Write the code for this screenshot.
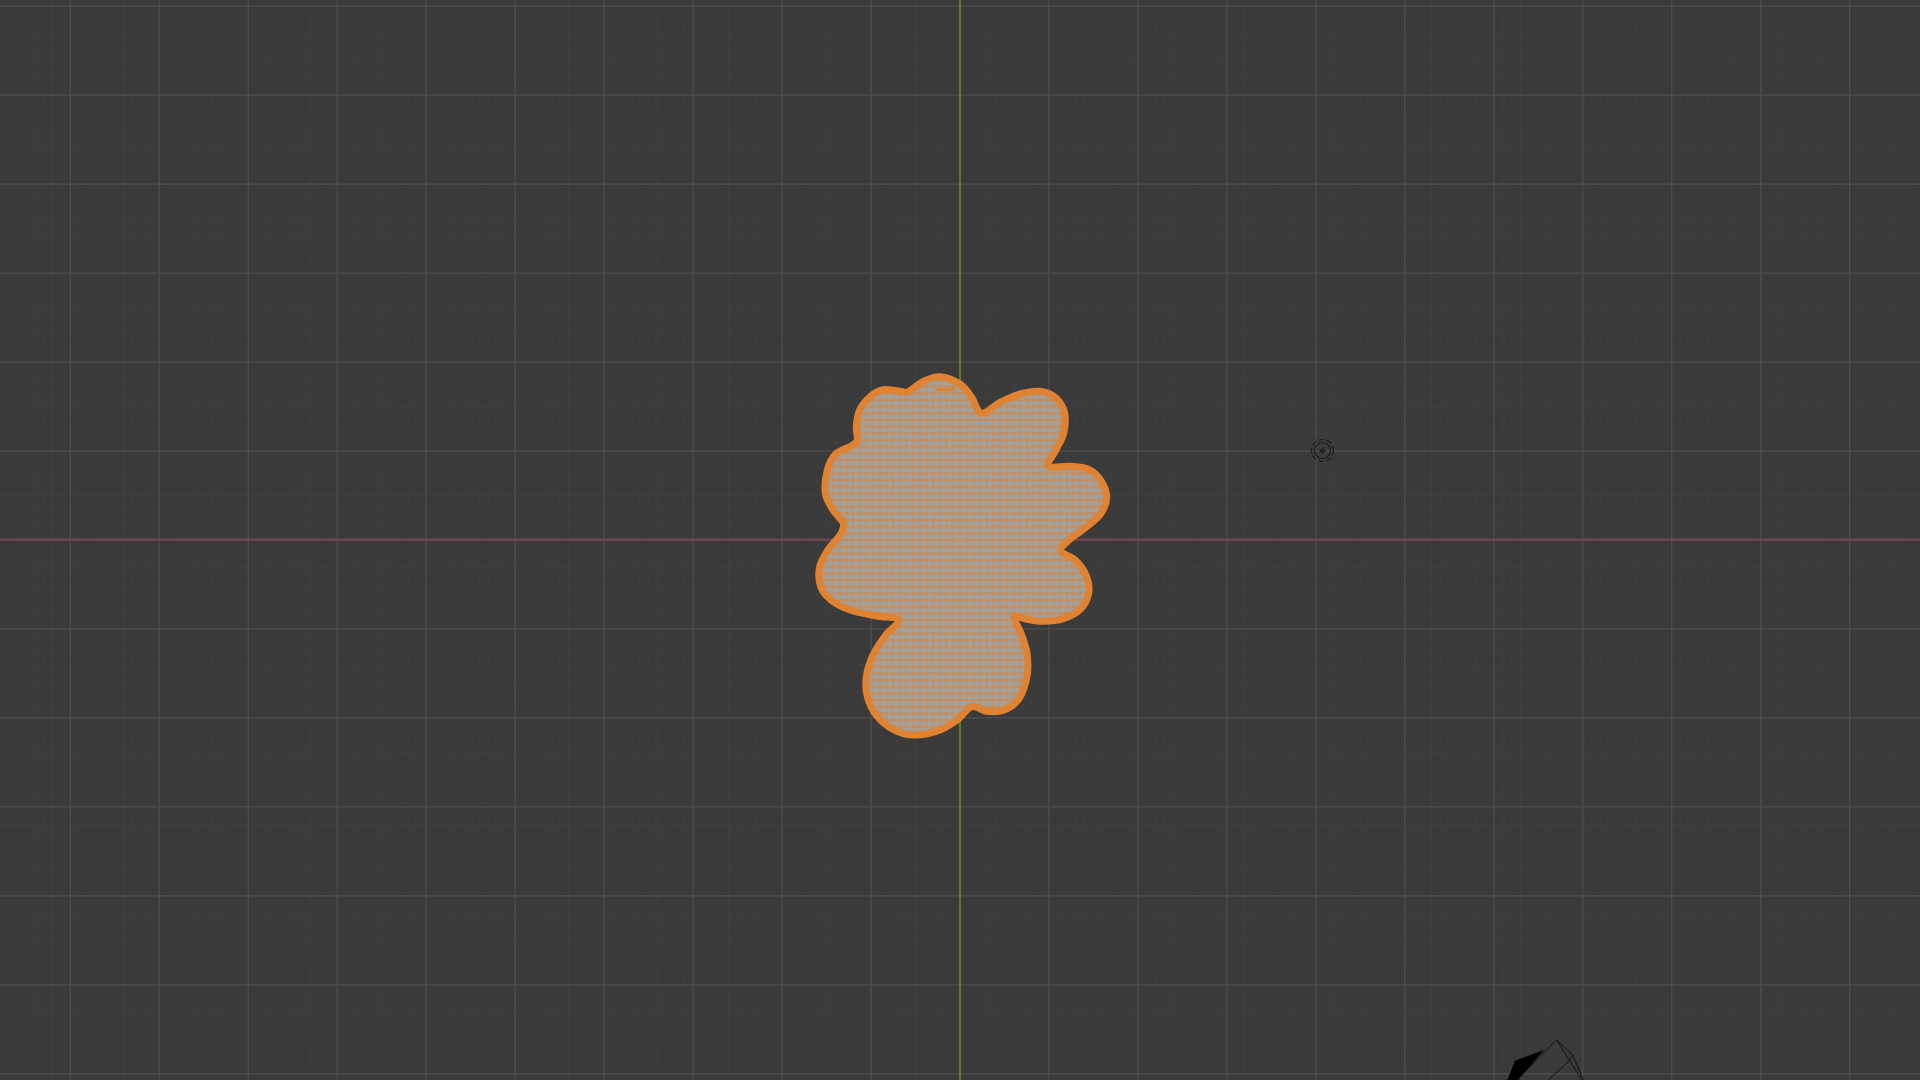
import React from "react";

const CENTER_X = 960;
const CENTER_Y = 540;
const MAJOR = 88.97;
const MINOR = MAJOR / 10;

const blobPoints: [number, number][] = [
  [420, 50], [480, 72], [515, 112], [545, 160], [600, 127], [660, 102], [720, 94], [768, 114],
  [794, 160], [791, 220], [768, 270], [745, 318], [810, 319], [868, 329], [906, 367], [920, 415],
  [901, 463], [850, 508], [810, 538], [782, 572], [828, 602], [860, 650], [866, 700], [841, 748],
  [790, 776], [730, 784], [680, 778], [642, 770], [663, 820], [681, 880], [681, 950], [656, 1018],
  [610, 1051], [560, 1054], [515, 1040], [470, 1081], [410, 1114], [340, 1125], [282, 1110], [229, 1066],
  [202, 1010], [199, 950], [219, 885], [257, 825], [296, 780], [230, 768], [152, 751], [94, 721],
  [62, 680], [59, 620], [84, 570], [120, 525], [130, 490], [99, 450], [76, 400], [82, 330],
  [107, 282], [155, 257], [172, 240], [169, 200], [179, 150], [214, 107], [250, 89], [300, 94],
  [325, 95], [370, 64],
];

const smoothPath = (pts: [number, number][]) => {
  const n = pts.length;
  const px = pts.map(([x, y]) => [800 + x / 3, 360 + y / 3]);
  let d = `M${px[0][0].toFixed(1)} ${px[0][1].toFixed(1)}`;
  for (let i = 0; i < n; i++) {
    const p0 = px[(i - 1 + n) % n];
    const p1 = px[i];
    const p2 = px[(i + 1) % n];
    const p3 = px[(i + 2) % n];
    const c1x = p1[0] + (p2[0] - p0[0]) / 6;
    const c1y = p1[1] + (p2[1] - p0[1]) / 6;
    const c2x = p2[0] - (p3[0] - p1[0]) / 6;
    const c2y = p2[1] - (p3[1] - p1[1]) / 6;
    d += `C${c1x.toFixed(1)} ${c1y.toFixed(1)} ${c2x.toFixed(1)} ${c2y.toFixed(1)} ${p2[0].toFixed(1)} ${p2[1].toFixed(1)}`;
  }
  return d + "Z";
};

const range = (from: number, to: number, step: number) => {
  const out: number[] = [];
  for (let v = from; v <= to; v += step) out.push(v);
  return out;
};

const minorX = range(CENTER_X - MINOR * 108, 1920, MINOR);
const minorY = range(CENTER_Y - MINOR * 61, 1080, MINOR);
const majorX = range(CENTER_X - MAJOR * 10, 1920, MAJOR).filter((x) => Math.abs(x - CENTER_X) > 1);
const majorY = range(CENTER_Y - MAJOR * 6, 1080, MAJOR).filter((y) => Math.abs(y - CENTER_Y) > 1);

const Grid = () => (
  <g>
    {minorX.map((x) => (
      <line key={x} x1={x} x2={x} y1={0} y2={1080} stroke="#3f3f3f" strokeWidth={1} />
    ))}
    {minorY.map((y) => (
      <line key={y} x1={0} x2={1920} y1={y} y2={y} stroke="#3f3f3f" strokeWidth={1} />
    ))}
    {majorX.map((x) => (
      <line key={x} x1={x} x2={x} y1={0} y2={1080} stroke="#4f4f4f" strokeWidth={1.2} />
    ))}
    {majorY.map((y) => (
      <line key={y} x1={0} x2={1920} y1={y} y2={y} stroke="#4f4f4f" strokeWidth={1.2} />
    ))}
    <line x1={0} x2={1920} y1={539.7} y2={539.7} stroke="#7a4650" strokeWidth={2} />
    <line x1={960} x2={960} y1={0} y2={1080} stroke="#5f7a30" strokeWidth={2} />
  </g>
);

const Mesh = () => {
  const d = smoothPath(blobPoints);
  return (
    <g>
      <defs>
        <pattern id="mesh" x={CENTER_X} y={CENTER_Y} width={6.67} height={6.67} patternUnits="userSpaceOnUse">
          <rect width={6.67} height={6.67} fill="#a49f98" />
          <path d="M0 0H6.67M0 6.67H6.67" stroke="#c88a52" strokeWidth={0.9} />
          <path d="M0 0V6.67M6.67 0V6.67" stroke="#b8926e" strokeWidth={0.5} />
          <circle cx={0} cy={0} r={1.5} fill="#dd8438" />
          <circle cx={6.67} cy={0} r={1.5} fill="#dd8438" />
          <circle cx={0} cy={6.67} r={1.5} fill="#dd8438" />
          <circle cx={6.67} cy={6.67} r={1.5} fill="#dd8438" />
        </pattern>
      </defs>
      <path d={d} fill="url(#mesh)" stroke="#df8232" strokeWidth={7} strokeLinejoin="round" />
      <path d="M936 389Q945 391 955 389" fill="none" stroke="#df8232" strokeWidth={3} />
      <circle cx={959.5} cy={540} r={2.2} fill="#a39a8e" stroke="#d49a3a" strokeWidth={1} />
    </g>
  );
};

const Cursor = () => (
  <g fill="none" stroke="#1c1c1c">
    <circle cx={1322.5} cy={450.5} r={11} strokeWidth={1.2} strokeDasharray="5 3" />
    <circle cx={1322.5} cy={450.5} r={8} strokeWidth={1.2} />
    <path d="M1322.5 447L1326 450.5L1322.5 454L1319 450.5Z" fill="#222222" stroke="none" />
  </g>
);

const CameraGizmo = () => (
  <g transform="translate(1490 1020) scale(0.3333)" fill="none" stroke="#111111" strokeWidth={3}>
    <path d="M162 90L75 122L52 180H85Z" fill="#000000" stroke="none" />
    <path d="M200 60L80 180M200 60L248 105L280 180M200 60L275 180M235 125L175 180M235 125L248 105" />
  </g>
);

export default function App() {
  return (
    <div className="h-screen w-screen overflow-hidden bg-[#3a3a3a]">
      <svg viewBox="0 0 1920 1080" className="block h-full w-full">
        <Grid />
        <Mesh />
        <Cursor />
        <CameraGizmo />
      </svg>
    </div>
  );
}
